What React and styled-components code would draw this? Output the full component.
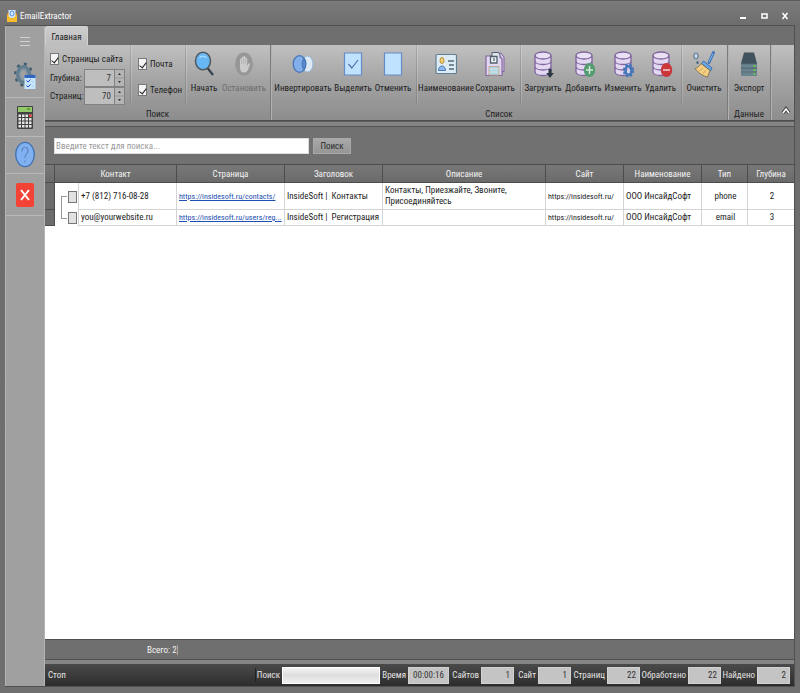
import React, { useState } from 'react'
import styled, { createGlobalStyle } from 'styled-components'

const GlobalStyle = createGlobalStyle`
  *, *::before, *::after {
    box-sizing: border-box;
  }
  body {
    margin: 0;
  }
  body, button, input {
    font-family: 'Roboto Condensed', 'Liberation Sans', Arial, sans-serif;
    font-size: 9px;
    line-height: 12px;
  }
`

const Window = styled.div`
  display: flex;
  flex-direction: column;
  min-height: 100vh;
  padding: 0 5px 6px;
  border: 1px solid #5c5c5c;
  border-width: 1px 0 0;
  background: linear-gradient(#7b7b7b, #6d6d6d 24px, #6f6f6f);
  color: #1c1c1c;
`

const TitleBar = styled.header`
  display: flex;
  align-items: center;
  gap: 3px;
  height: 24px;
  padding: 5px 1px 0 2px;
  color: #fff;
`

const Title = styled.h1`
  flex: 1;
  margin: 0;
  font-size: 9px;
  font-weight: 400;
`

const WindowButton = styled.button`
  display: grid;
  place-items: center;
  width: 18px;
  height: 14px;
  padding: 0;
  border: 0;
  background: none;
`

const Body = styled.div`
  display: flex;
  flex: 1;
  border: 1px solid #505050;
  border-width: 1px 1px 1px 0;
`

const Sidebar = styled.nav`
  flex: none;
  width: 40px;
  border: 1px solid #b4b4b4;
  border-width: 0 1px;
  background: #a0a0a0;
`

const SideButton = styled.button`
  display: grid;
  place-items: center;
  width: 100%;
  height: ${(props) => props.$height}px;
  padding: 0;
  border: 0;
  border-bottom: ${(props) => (props.$line ? '1px solid #b8b8b8' : '0')};
  background: none;
`

const Main = styled.main`
  display: flex;
  flex: 1;
  flex-direction: column;
  min-width: 0;
`

const TabStrip = styled.div`
  display: flex;
  height: 19px;
  background: #6f6f6f;
`

const Tab = styled.button`
  width: 43px;
  padding: 2px 0 0;
  border: 1px solid #d2d2d2;
  border-bottom: 0;
  border-radius: 2px 2px 0 0;
  background: linear-gradient(#cdcdcd, #bdbdbd);
  color: #1c1c1c;
`

const Ribbon = styled.div`
  display: flex;
  height: 76px;
  border-bottom: 1px solid #4c4c4c;
  background: linear-gradient(#c0c0c0, #a2a2a2 50%, #8d8d8d);
`

const Group = styled.section`
  display: flex;
  flex: none;
  flex-direction: column;
  width: ${(props) => props.$width}px;
  border-right: 1px solid #7b7b7b;
  box-shadow: 1px 0 0 #b1b1b1;
`

const GroupBody = styled.div`
  display: flex;
  flex: 1;
  padding-left: ${(props) => props.$left || 0}px;
`

const GroupCaption = styled.div`
  height: 14px;
  line-height: 16px;
  text-align: center;
`

const Divider = styled.span`
  flex: none;
  width: 2px;
  height: 58px;
  margin: 0 ${(props) => props.$right}px 0 ${(props) => props.$left}px;
  background: linear-gradient(90deg, rgba(0, 0, 0, 12%) 1px, rgba(255, 255, 255, 18%) 1px);
`

const RibbonButton = styled.button`
  display: flex;
  flex: none;
  flex-direction: column;
  align-items: center;
  gap: 4px;
  width: ${(props) => props.$width}px;
  height: 56px;
  padding: 5px 0 0;
  border: 0;
  background: none;
  color: #1c1c1c;
  white-space: nowrap;

  &:disabled {
    color: #6d6d6d;
  }
`

const Options = styled.div`
  display: flex;
  flex-direction: column;
  width: 75px;
  padding-top: 8px;
`

const Contacts = styled.div`
  display: flex;
  flex-direction: column;
  gap: 14px;
  width: 43px;
  padding-top: 13px;
`

const CheckLabel = styled.label`
  display: flex;
  align-items: center;
  gap: 3px;
  height: 12px;
  white-space: nowrap;
`

const Check = styled.input.attrs({ type: 'checkbox' })`
  appearance: none;
  display: grid;
  flex: none;
  place-items: center;
  width: 9px;
  height: 12px;
  margin: 0;
  border: 1px solid #777;
  background: #f4f4f4;

  &:checked::after {
    content: '';
    width: 4px;
    height: 7px;
    border: solid #222;
    border-width: 0 1px 1px 0;
    transform: rotate(38deg);
  }
`

const SpinLabel = styled.label`
  display: flex;
  align-items: center;
  justify-content: space-between;
  width: 75px;
  height: 18px;

  ${CheckLabel} + & {
    margin-top: 4px;
  }
`

const SpinBox = styled.span`
  display: flex;
  flex: none;
  width: 41px;
  height: 18px;
  border: 1px solid #828282;
  background: #b4b4b4;
`

const SpinInput = styled.input`
  width: 30px;
  padding: 0 3px 0 0;
  border: 0;
  border-right: 1px solid #828282;
  background: #bebebe;
  color: #333;
  text-align: right;
`

const SpinArrows = styled.svg`
  width: 9px;
  height: 16px;
`

const Collapse = styled.button`
  align-self: flex-end;
  width: 16px;
  height: 16px;
  margin: 0 0 0 auto;
  padding: 0;
  border: 0;
  background: none;
`

const SearchBar = styled.form`
  display: flex;
  align-items: center;
  gap: 4px;
  height: 43px;
  padding: 5px 9px 0;
  border-top: 1px solid #606060;
  background: linear-gradient(#858585 4px, #555 4px, #555 5px, #717171 5px);
`

const SearchInput = styled.input`
  width: 255px;
  height: 16px;
  padding: 0 1px;
  border: 1px solid #ddd;
  background: #fff;

  &::placeholder {
    color: #999;
  }
`

const SearchButton = styled.button`
  width: 38px;
  height: 16px;
  padding: 0;
  border: 1px solid #a9a9a9;
  background: linear-gradient(#a9a9a9, #969696);
  color: #2b2b2b;
`

const TableArea = styled.div`
  flex: 1;
  background: #fff;
`

const Table = styled.table`
  width: 100%;
  border-collapse: separate;
  border-spacing: 0;
  table-layout: fixed;
`

const HeadCell = styled.th`
  height: 19px;
  padding: 0;
  border: solid #4c4c4c;
  border-width: 1px 1px 1px 0;
  background: linear-gradient(#787878, #6a6a6a);
  color: #f4f4f4;
  font-weight: 400;

  &:last-child {
    border-right: 0;
  }
`

const Row = styled.tr`
  height: ${(props) => props.$height}px;
`

const Cell = styled.td`
  padding: 0 0 0 2px;
  border: solid #d4d4d4;
  border-width: 0 1px 1px 0;
  line-height: 11px;
  text-align: ${(props) => (props.$center ? 'center' : 'left')};
  white-space: ${(props) => (props.$wrap ? 'normal' : 'pre')};

  &:last-child {
    border-right: 0;
  }
`

const UrlCell = styled(Cell)`
  font-size: 8px;
`

const Indicator = styled.td`
  padding: 0;
  border: solid #4c4c4c;
  border-width: 0 1px 1px 0;
  background: #6c6c6c;
`

const TreeCell = styled.td`
  padding: 0 2px 0 13px;
  border-right: 1px solid #d4d4d4;
  background:
    linear-gradient(#999, #999) 6px 50% / 6px 1px no-repeat,
    linear-gradient(#999, #999) 6px ${(props) => (props.$last ? '0' : '100%')} / 1px 50% no-repeat;

  ${Check} {
    background: #e2e2e2;
  }
`

const Link = styled.a`
  color: #1c4fb0;
`

const Summary = styled.div`
  height: 21px;
  padding: 4px 0 0 102px;
  border: solid #505050;
  border-width: 1px 0;
  background: #6f6f6f;
  color: #f4f4f4;
`

const SummaryValue = styled.span`
  border-right: 1px solid #aaa;
`

const StatusBar = styled.footer`
  display: flex;
  align-items: center;
  height: 26px;
  padding: 4px 4px 0 3px;
  background: linear-gradient(#858585 4px, #4a4a4a 4px, #2d2d2d);
  color: #e4e4e4;
`

const StatusText = styled.span`
  flex: 1;
`

const StatusField = styled.label`
  display: flex;
  align-items: center;
  justify-content: flex-end;
  gap: 2px;
  width: ${(props) => props.$width}px;
  white-space: nowrap;
`

const ProgressField = styled(StatusField)`
  height: 14px;
  border-left: 1px solid #222;
`

const StatusInput = styled.input`
  width: ${(props) => props.$width || 33}px;
  height: 17px;
  padding: 0 3px;
  border: 1px solid #d2d2d2;
  background: #c4c4c4;
  color: #333;
  text-align: ${(props) => (props.$center ? 'center' : 'right')};
`

const Progress = styled.div`
  width: 98px;
  height: 17px;
  border: 1px solid #fff;
  background: linear-gradient(#f2f2f2, #dedede 50%, #f0f0f0);
`

const Icon = ({ children, width = 26, height = 28 }) => (
  <svg width={width} height={height} viewBox={`0 0 ${width} ${height}`} fill='none' aria-hidden='true'>
    {children}
  </svg>
)

const Database = ({ children }) => (
  <Icon>
    <path d='M5 5v17c0 2 3.500 3.500 8 3.500s8-1.500 8-3.500V5' fill='#e2d8f2' />
    <ellipse cx='13' cy='5.500' rx='8' ry='3.500' fill='#e9e0f6' />
    <g stroke='#80659c' strokeWidth='1.300'>
      <ellipse cx='13' cy='5.500' rx='8' ry='3.500' />
      <path d='M5 5.500v5.500c0 2 3.500 3.500 8 3.500s8-1.500 8-3.500V5.500M5 11v5.500c0 2 3.500 3.500 8 3.500s8-1.500 8-3.500V11M5 16.500V22c0 2 3.500 3.500 8 3.500s8-1.500 8-3.500v-5.500' />
    </g>
    {children}
  </Icon>
)

const icons = {
  search: (
    <Icon>
      <path d='M16.500 18l5.500 7' stroke='#34414c' strokeWidth='2.200' />
      <ellipse cx='12' cy='11' rx='7.500' ry='8.700' fill='#67b7f5' stroke='#50585e' strokeWidth='1.500' />
      <path d='M8.500 8c1.500-2.500 5.500-2.500 7 0' stroke='#a9dcff' strokeWidth='1.400' />
    </Icon>
  ),
  stop: (
    <Icon>
      <ellipse cx='13' cy='14' rx='9' ry='11.500' fill='#979797' />
      <path
        d='M9 16.500V9.500c0-1.400 1.700-1.400 1.700 0V7.800c0-1.400 1.900-1.400 1.900 0V7c0-1.400 1.900-1.400 1.900 0v1.800c0-1.300 1.700-1.300 1.700 0V16l1.200-2.300c.7-1 2-.5 1.600.8l-2.200 5.600c-.6 1.600-1.700 2.400-3.800 2.400-2.800 0-4-1.700-4-6z'
        fill='#cbcbcb'
      />
      <path d='M10.700 14V9.500M12.600 13.500V8M14.500 14V9' stroke='#a5a5a5' strokeWidth='.5' />
    </Icon>
  ),
  invert: (
    <Icon>
      <ellipse cx='17.500' cy='14' rx='5.500' ry='8' fill='#dce8f2' stroke='#91b6dc' />
      <ellipse cx='9.500' cy='14' rx='6.300' ry='8.300' fill='#82aeea' stroke='#4874b8' strokeWidth='1.300' />
      <path d='M14 8c-2.500 3.500-2.500 8.500 0 12 2.300-3.500 2.300-8.500 0-12z' fill='#5b88ca' stroke='#4874b8' />
    </Icon>
  ),
  select: (
    <Icon>
      <path d='M4.500 3h17v22h-17z' fill='#bfe3ff' stroke='#648cc5' strokeWidth='1.200' />
      <path d='M8.500 14l3.300 4L18 10' stroke='#5272a2' strokeWidth='1.200' />
    </Icon>
  ),
  clear: (
    <Icon>
      <path d='M4.500 3h17v22h-17z' fill='#bfe3ff' stroke='#648cc5' strokeWidth='1.200' />
    </Icon>
  ),
  card: (
    <Icon>
      <rect x='3' y='4.500' width='20.500' height='19' rx='1' fill='#dcebf4' stroke='#647f92' strokeWidth='1.200' />
      <ellipse cx='9' cy='10.500' rx='2' ry='3' fill='#f0cf7e' stroke='#bd8b28' />
      <path d='M5.500 20.500c0-6 7-6 7 0z' fill='#8cb7ec' stroke='#4b78b6' />
      <path d='M15 11h6M16 15h5M16 19h5' stroke='#566879' strokeWidth='1.300' />
    </Icon>
  ),
  save: (
    <Icon>
      <path d='M11 3h8l3 4v14.500h-3' fill='#d4c5e7' stroke='#83679f' />
      <path d='M4 6h13l3 3v16.500H4z' fill='#e2d8f2' stroke='#83679f' strokeWidth='1.200' />
      <path d='M10 6V2.500h6.500L18 5v2.500' fill='#dfe6ec' stroke='#50606e' />
      <path d='M8.500 6.500H15V13H8.500z' fill='#eef3f7' stroke='#50606e' strokeWidth='1.300' />
      <path d='M12 8v3' stroke='#50606e' strokeWidth='1.300' />
      <path d='M7 16.500h10v8.500H7z' fill='#a8d8ee' stroke='#c2a88f' />
      <path d='M7.500 19h9M7.500 22h9' stroke='#e8dfca' />
    </Icon>
  ),
  load: (
    <Database>
      <path d='M18.500 19h3v4h2.300L20 28l-3.800-5h2.300z' fill='#2b3947' />
    </Database>
  ),
  add: (
    <Database>
      <ellipse cx='18.500' cy='20' rx='5.700' ry='7' fill='#559b70' />
      <path d='M18.500 16v8M15 20h7' stroke='#d0e8d7' strokeWidth='1.500' />
    </Database>
  ),
  edit: (
    <Database>
      <ellipse cx='18.500' cy='20.500' rx='4.400' ry='5.900' stroke='#4576b8' strokeWidth='2.400' strokeDasharray='2.400 1.690' />
      <ellipse cx='18.500' cy='20.500' rx='3' ry='4.200' stroke='#4576b8' strokeWidth='2.600' />
      <ellipse cx='18.500' cy='20.500' rx='1.300' ry='2' fill='#d5cfe6' />
    </Database>
  ),
  remove: (
    <Database>
      <ellipse cx='18.500' cy='20' rx='5.700' ry='7' fill='#cb3739' />
      <path d='M15 20h7' stroke='#f0d3d3' strokeWidth='1.500' />
    </Database>
  ),
  broom: (
    <Icon>
      <path d='M22.500 2.500l-4.500 10' stroke='#3f73b3' strokeWidth='3' strokeLinecap='round' />
      <path d='M22 3.500l-4 8.500' stroke='#7dbaf1' />
      <path d='M12.500 11l8.500 7-1.500 3-9-7.500z' fill='#68a7e4' stroke='#3f73b3' />
      <path d='M10 13.500l9 7-2.500 6.500C12 26 8 23.500 4 18.500c2.500-.5 4.500-2.500 6-5z' fill='#f4ce82' stroke='#6f5b3f' strokeWidth='.7' />
      <path d='M8.500 21l3-3M12 24l2.500-3.500' stroke='#c19145' strokeWidth='.7' />
      <ellipse cx='5' cy='6' rx='2.200' ry='3' fill='#c3d8e9' stroke='#4c6881' />
      <ellipse cx='6.500' cy='12.500' rx='1.200' ry='1.500' fill='#4c6881' />
    </Icon>
  ),
  export: (
    <Icon>
      <path d='M8 2.500h10l3 11H5z' fill='#3f525d' />
      <path d='M5 13.500h16v4H5zM5 18h16v3.500H5zM5 22.500h16V26H5z' fill='#698491' />
      <path d='M5 13.700h16M5 18h16M5 22h16' stroke='#40545f' />
      <path d='M17.500 15.700h2M17.500 20h2M17.500 24h2' stroke='#67df3e' strokeWidth='1.500' />
    </Icon>
  ),
}

const menuIcon = (
  <Icon width={12} height={12}>
    <path d='M1 2.500h10M1 6.500h10M1 10.500h10' stroke='#d1d1d1' />
  </Icon>
)

const settingsIcon = (
  <Icon width={22} height={28}>
    <ellipse cx='9.500' cy='12.500' rx='8' ry='10.500' stroke='#465d6d' strokeWidth='3' strokeDasharray='3 4.300' />
    <ellipse cx='9.500' cy='12.500' rx='5.800' ry='7.800' stroke='#627f91' strokeWidth='3.500' />
    <ellipse cx='9.500' cy='12.500' rx='3.500' ry='4.800' fill='#a0a0a0' stroke='#7893a2' />
    <path d='M10.500 14h11v13h-11z' fill='#c5e6fb' />
    <path d='M10.500 13h11v3h-11z' fill='#3167c2' />
    <path d='M12.500 18.500l1.500 1.500 2.500-2.500M12.500 23.500l1.500 1.500 2.500-2.500' stroke='#263fc0' />
    <path d='M17.500 19.500h2M17.500 24h2' stroke='#9fcdeb' />
  </Icon>
)

const calculatorIcon = (
  <Icon width={18} height={26}>
    <rect x='1' y='2' width='16' height='23' rx='1' fill='#424242' />
    <path d='M2 3h14v5H2z' fill='#91c96a' />
    <path d='M11 5h3' stroke='#3e6a27' />
    <path d='M2.500 11.700h13M2.500 15.200h13M2.500 18.700h13M2.500 22.200h13' stroke='#e5e5e5' strokeWidth='2.500' strokeDasharray='2.500 1' />
    <path d='M13 10.400h2.500v2.600H13z' fill='#e4443a' />
  </Icon>
)

const helpIcon = (
  <Icon width={22} height={28}>
    <ellipse cx='11' cy='13.500' rx='9.300' ry='12.200' fill='#81b1f0' stroke='#3f70b0' strokeWidth='1.300' />
    <path d='M8 10.500c0-5.500 6-5.500 6-1 0 3.500-3 3.500-3 7.500M11 19.500v2' stroke='#5d88c5' strokeWidth='1.200' />
  </Icon>
)

const closeIcon = (
  <Icon width={18} height={24}>
    <rect width='18' height='24' rx='2' fill='#f34336' />
    <path d='M5 7l8 10M13 7L5 17' stroke='#fff' strokeWidth='2' />
  </Icon>
)

const sideItems = [
  { name: 'Меню', icon: menuIcon, height: 29 },
  { name: 'Настройки', icon: settingsIcon, height: 43, line: true },
  { name: 'Калькулятор', icon: calculatorIcon, height: 39, line: true },
  { name: 'Справка', icon: helpIcon, height: 37, line: true },
  { name: 'Выход', icon: closeIcon, height: 42, line: true },
]

const rows = [
  {
    contact: '+7 (812) 716-08-28',
    page: 'https://insidesoft.ru/contacts/',
    title: 'InsideSoft |  Контакты',
    description: 'Контакты, Приезжайте, Звоните, Присоединяйтесь',
    type: 'phone',
    depth: 2,
    height: 27,
  },
  {
    contact: 'you@yourwebsite.ru',
    page: 'https://insidesoft.ru/users/reg...',
    title: 'InsideSoft |  Регистрация',
    description: '',
    type: 'email',
    depth: 3,
    height: 16,
  },
]

const counters = [
  { label: 'Сайтов', value: 1, width: 65 },
  { label: 'Сайт', value: 1, width: 57 },
  { label: 'Страниц', value: 22, width: 69 },
  { label: 'Обработано', value: 22, width: 81 },
  { label: 'Найдено', value: 2, width: 69 },
]

function Action(props) {
  const { icon, width, children, disabled } = props
  return (
    <RibbonButton type='button' $width={width} disabled={disabled}>
      {icons[icon]}
      {children}
    </RibbonButton>
  )
}

function Spin(props) {
  const { label, initial } = props
  const [value, setValue] = useState(initial)
  return (
    <SpinLabel>
      {label}
      <SpinBox>
        <SpinInput value={value} onChange={(e) => setValue(e.target.value)} />
        <SpinArrows viewBox='0 0 9 16'>
          <path d='M3 5l1.500-2L6 5zM3 11l1.500 2L6 11z' fill='#333' />
          <path d='M0 8h9' stroke='#999' />
        </SpinArrows>
      </SpinBox>
    </SpinLabel>
  )
}

function RibbonBar() {
  return (
    <Ribbon>
      <Group $width={226}>
        <GroupBody $left={5}>
          <Options>
            <CheckLabel>
              <Check defaultChecked />
              Страницы сайта
            </CheckLabel>
            <Spin label='Глубина:' initial='7' />
            <Spin label='Страниц:' initial='70' />
          </Options>
          <Divider $left={5} $right={6} />
          <Contacts>
            <CheckLabel>
              <Check defaultChecked />
              Почта
            </CheckLabel>
            <CheckLabel>
              <Check defaultChecked />
              Телефон
            </CheckLabel>
          </Contacts>
          <Divider $left={4} $right={0} />
          <Action icon='search' width={34}>Начать</Action>
          <Action icon='stop' width={46} disabled>Остановить</Action>
        </GroupBody>
        <GroupCaption>Поиск</GroupCaption>
      </Group>
      <Group $width={457}>
        <GroupBody $left={3}>
          <Action icon='invert' width={58}>Инвертировать</Action>
          <Action icon='select' width={42}>Выделить</Action>
          <Action icon='clear' width={38}>Отменить</Action>
          <Divider $left={4} $right={2} />
          <Action icon='card' width={52}>Наименование</Action>
          <Action icon='save' width={46}>Сохранить</Action>
          <Divider $left={2} $right={1} />
          <Action icon='load' width={40}>Загрузить</Action>
          <Action icon='add' width={41}>Добавить</Action>
          <Action icon='edit' width={38}>Изменить</Action>
          <Action icon='remove' width={37}>Удалить</Action>
          <Divider $left={2} $right={2} />
          <Action icon='broom' width={38}>Очистить</Action>
        </GroupBody>
        <GroupCaption>Список</GroupCaption>
      </Group>
      <Group $width={43}>
        <GroupBody>
          <Action icon='export' width={42}>Экспорт</Action>
        </GroupBody>
        <GroupCaption>Данные</GroupCaption>
      </Group>
      <Collapse type='button' aria-label='Свернуть ленту'>
        <Icon width={12} height={12}>
          <path d='M3 8l3-4 3 4' stroke='#444' strokeWidth='3.500' />
          <path d='M3 8l3-4 3 4' stroke='#fff' strokeWidth='1.500' />
        </Icon>
      </Collapse>
    </Ribbon>
  )
}

function ContactsTable() {
  return (
    <Table>
      <colgroup>
        <col style={{ width: 10 }} />
        <col style={{ width: 24 }} />
        <col style={{ width: 98 }} />
        <col style={{ width: 108 }} />
        <col style={{ width: 98 }} />
        <col />
        <col style={{ width: 78 }} />
        <col style={{ width: 78 }} />
        <col style={{ width: 46 }} />
        <col style={{ width: 46 }} />
      </colgroup>
      <thead>
        <tr>
          <HeadCell />
          <HeadCell colSpan={2}>Контакт</HeadCell>
          <HeadCell>Страница</HeadCell>
          <HeadCell>Заголовок</HeadCell>
          <HeadCell>Описание</HeadCell>
          <HeadCell>Сайт</HeadCell>
          <HeadCell>Наименование</HeadCell>
          <HeadCell>Тип</HeadCell>
          <HeadCell>Глубина</HeadCell>
        </tr>
      </thead>
      <tbody>
        {rows.map((row, i) => (
          <Row key={row.contact} $height={row.height}>
            <Indicator />
            <TreeCell $last={i === rows.length - 1}>
              <Check aria-label={row.contact} />
            </TreeCell>
            <Cell>{row.contact}</Cell>
            <UrlCell>
              <Link href={row.page}>{row.page}</Link>
            </UrlCell>
            <Cell>{row.title}</Cell>
            <Cell $wrap>{row.description}</Cell>
            <UrlCell>https://insidesoft.ru/</UrlCell>
            <Cell>ООО ИнсайдСофт</Cell>
            <Cell $center>{row.type}</Cell>
            <Cell $center>{row.depth}</Cell>
          </Row>
        ))}
      </tbody>
    </Table>
  )
}

export default function App() {
  return (
    <Window>
      <GlobalStyle />
      <TitleBar>
        <Icon width={10} height={14}>
          <path d='M0 5l5-4 5 4v8H0z' fill='#e79b19' />
          <path d='M1.500 1h7v8h-7z' fill='#d8e9fb' />
          <ellipse cx='5' cy='4.500' rx='2' ry='2.500' stroke='#4a8be0' />
          <path d='M0 6l5 4 5-4v7H0z' fill='#fbbc2c' />
        </Icon>
        <Title>EmailExtractor</Title>
        <WindowButton type='button' aria-label='Свернуть'>
          <Icon width={10} height={10}>
            <path d='M2 7h6' stroke='#fff' strokeWidth='2' />
          </Icon>
        </WindowButton>
        <WindowButton type='button' aria-label='Развернуть'>
          <Icon width={10} height={10}>
            <path d='M3 3h5v4H3z' stroke='#fff' strokeWidth='1.500' />
          </Icon>
        </WindowButton>
        <WindowButton type='button' aria-label='Закрыть'>
          <Icon width={10} height={10}>
            <path d='M2.500 2l5 6M7.500 2l-5 6' stroke='#fff' strokeWidth='1.500' />
          </Icon>
        </WindowButton>
      </TitleBar>
      <Body>
        <Sidebar>
          {sideItems.map((item) => (
            <SideButton
              key={item.name}
              type='button'
              aria-label={item.name}
              $height={item.height}
              $line={item.line}
            >
              {item.icon}
            </SideButton>
          ))}
        </Sidebar>
        <Main>
          <TabStrip>
            <Tab type='button'>Главная</Tab>
          </TabStrip>
          <RibbonBar />
          <SearchBar onSubmit={(e) => e.preventDefault()}>
            <SearchInput aria-label='Поиск' placeholder='Введите текст для поиска...' />
            <SearchButton>Поиск</SearchButton>
          </SearchBar>
          <TableArea>
            <ContactsTable />
          </TableArea>
          <Summary>
            <SummaryValue>Всего: 2</SummaryValue>
          </Summary>
          <StatusBar>
            <StatusText>Стоп</StatusText>
            <ProgressField as='div' $width={125}>
              Поиск
              <Progress role='progressbar' aria-label='Поиск' />
            </ProgressField>
            <StatusField $width={69}>
              Время
              <StatusInput $width={41} $center readOnly value='00:00:16' />
            </StatusField>
            {counters.map((item) => (
              <StatusField key={item.label} $width={item.width}>
                {item.label}
                <StatusInput readOnly value={item.value} />
              </StatusField>
            ))}
          </StatusBar>
        </Main>
      </Body>
    </Window>
  )
}
